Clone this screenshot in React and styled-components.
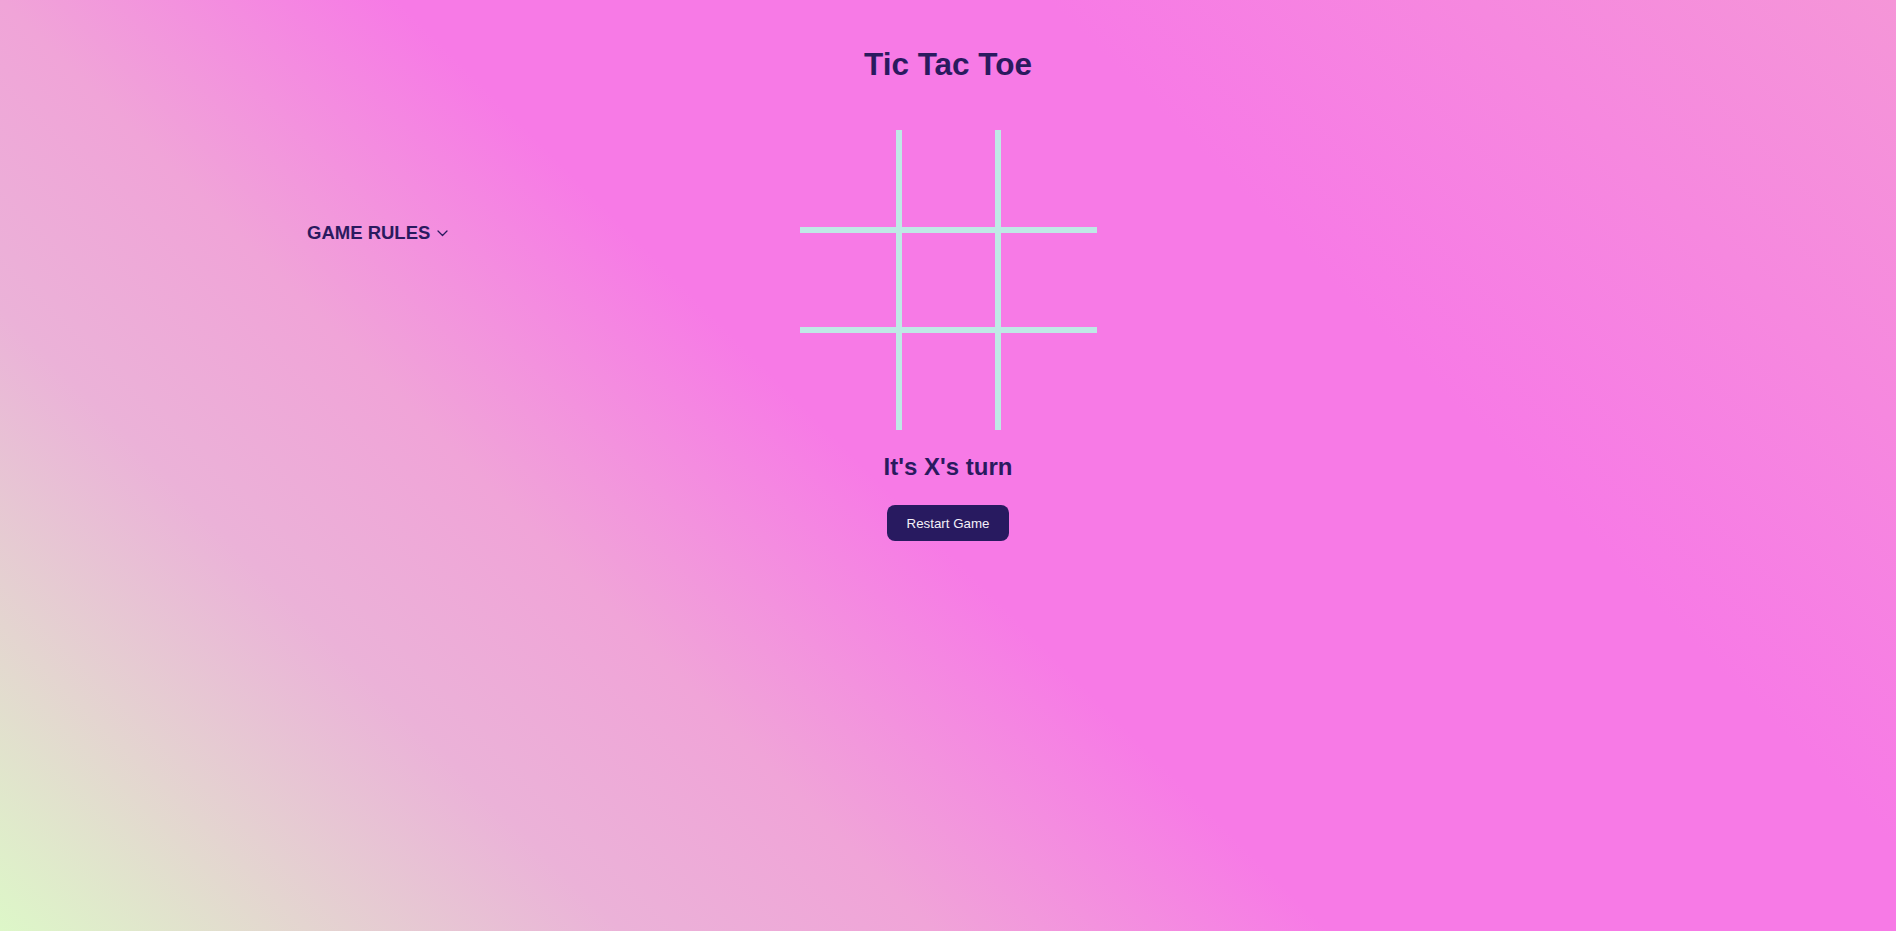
import React, { useState } from "react";
import styled, { createGlobalStyle } from "styled-components";

const GlobalStyle = createGlobalStyle`
  html, body {
    margin: 0;
    min-height: 100%;
  }
  body {
    font-family: "Liberation Sans", Arial, sans-serif;
    background: linear-gradient(
      45deg,
      #ddf7c8 0%,
      #ebb2d8 22%,
      #f0a4d8 33%,
      #f77ae6 47%,
      #f77ae6 70%,
      #f596d8 100%
    );
    background-attachment: fixed;
    min-height: 100vh;
  }
`;

const Page = styled.div`
  min-height: 100vh;
  display: flex;
  flex-direction: column;
  align-items: center;
  color: #2a1a5f;
`;

const Title = styled.h1`
  margin: 46px 0 0;
  font-size: 31.5px;
  line-height: 36px;
  font-weight: 700;
`;

const Row = styled.div`
  width: 100%;
  margin-top: 48px;
  display: grid;
  grid-template-columns: 1fr auto 1fr;
`;

const Side = styled.div`
  padding-left: 307px;
  padding-top: 93px;
`;

const RulesToggle = styled.button`
  display: inline-flex;
  align-items: center;
  gap: 7px;
  background: none;
  border: none;
  padding: 0;
  cursor: pointer;
  color: #2a1a5f;
  font-family: "Liberation Sans", Arial, sans-serif;
  font-size: 18.5px;
  font-weight: 700;
  line-height: 20px;
`;

const Board = styled.div`
  display: grid;
  grid-template-columns: repeat(3, 99px);
  grid-template-rows: repeat(3, 100px);
`;

const line = "3px solid #bfe8e6";

const Cell = styled.div`
  box-sizing: border-box;
  border-top: ${(p) => (p.row > 0 ? line : "none")};
  border-bottom: ${(p) => (p.row < 2 ? line : "none")};
  border-left: ${(p) => (p.col > 0 ? line : "none")};
  border-right: ${(p) => (p.col < 2 ? line : "none")};
  display: flex;
  align-items: center;
  justify-content: center;
  font-size: 56px;
  font-weight: 700;
  cursor: pointer;
`;

const Status = styled.h2`
  margin: 23px 0 0;
  font-size: 24px;
  line-height: 28px;
  font-weight: 700;
`;

const RestartButton = styled.button`
  margin-top: 24px;
  height: 36px;
  padding: 0 20px;
  border: none;
  border-radius: 8px;
  background: #281a60;
  color: #f4f0f8;
  font-family: "Liberation Sans", Arial, sans-serif;
  font-size: 13.3px;
  cursor: pointer;
`;

function Chevron() {
  return (
    <svg width="11" height="7" viewBox="0 0 11 7" fill="none">
      <polyline
        points="1,1 5.5,5.5 10,1"
        stroke="#2a1a5f"
        strokeWidth="1.3"
        strokeLinecap="round"
        strokeLinejoin="round"
      />
    </svg>
  );
}

export default function App() {
  const [cells, setCells] = useState(Array(9).fill(null));
  const [xTurn, setXTurn] = useState(true);

  const play = (i) => {
    if (cells[i]) return;
    const next = cells.slice();
    next[i] = xTurn ? "X" : "O";
    setCells(next);
    setXTurn(!xTurn);
  };

  const restart = () => {
    setCells(Array(9).fill(null));
    setXTurn(true);
  };

  return (
    <>
      <GlobalStyle />
      <Page>
        <Title>Tic Tac Toe</Title>
        <Row>
          <Side>
            <RulesToggle>
              GAME RULES <Chevron />
            </RulesToggle>
          </Side>
          <Board>
            {cells.map((v, i) => (
              <Cell
                key={i}
                row={Math.floor(i / 3)}
                col={i % 3}
                onClick={() => play(i)}
              >
                {v}
              </Cell>
            ))}
          </Board>
          <div />
        </Row>
        <Status>It's {xTurn ? "X" : "O"}'s turn</Status>
        <RestartButton onClick={restart}>Restart Game</RestartButton>
      </Page>
    </>
  );
}
